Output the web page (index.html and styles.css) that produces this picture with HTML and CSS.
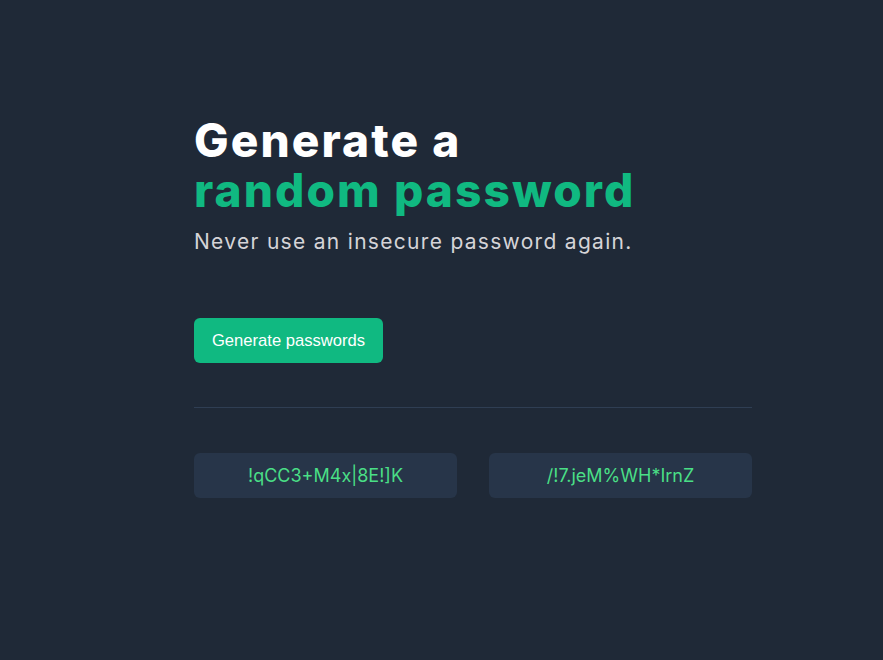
FILE: index.html
```html
<!DOCTYPE html>
<html lang="en">
<head>
<meta charset="utf-8">
<title>Password Generator</title>
<link rel="stylesheet" href="styles.css">
</head>
<body>
<main class="container">
  <h1 class="title"><span class="line">Generate a</span><span class="line accent">random password</span></h1>
  <p class="subtitle">Never use an insecure password again.</p>
  <button class="btn">Generate passwords</button>
  <hr class="divider">
  <div class="passwords">
    <div class="pw">!qCC3+M4x|8E!]K</div>
    <div class="pw">/!7.jeM%WH*IrnZ</div>
  </div>
</main>
</body>
</html>
```
FILE: styles.css
```css
html, body {
  margin: 0;
  padding: 0;
  background: #1f2937;
  height: 100%;
}
body {
  font-family: "Inter", "Open Sans", sans-serif;
}
.container {
  width: 558px;
  margin-left: 194px;
  padding-top: 115px;
}
.title {
  margin: 0;
  font-size: 46px;
  line-height: 50px;
  font-weight: 800;
  color: #ffffff;
  letter-spacing: 2.1px;
}
.line {
  display: block;
}
.accent {
  color: #10b981;
}
.subtitle {
  margin: 13px 0 0;
  font-size: 21px;
  line-height: 28px;
  color: #d5d4d8;
  font-weight: 400;
  letter-spacing: 1.3px;
}
.btn {
  display: block;
  margin-top: 62px;
  width: 189px;
  height: 45px;
  border: none;
  border-radius: 6px;
  background: #10b981;
  color: #ffffff;
  font-family: "Liberation Sans", Arial, sans-serif;
  font-size: 16.6px;
  padding: 0;
  cursor: pointer;
}
.divider {
  margin: 44px 0 0;
  border: none;
  border-top: 1px solid #2f3e53;
  height: 0;
}
.passwords {
  margin-top: 45px;
  display: flex;
  gap: 32px;
}
.pw {
  flex: 1;
  height: 45px;
  border-radius: 6px;
  background: #273549;
  color: #4adf86;
  font-size: 18px;
  display: flex;
  align-items: center;
  justify-content: center;
}
```
